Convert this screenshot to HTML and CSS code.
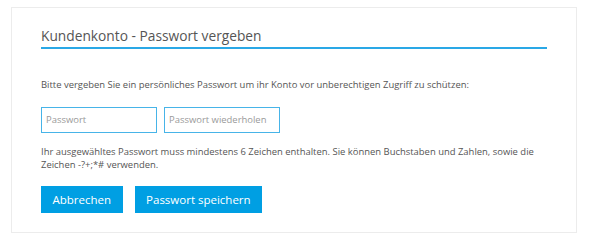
FILE: index.html
```html
<!DOCTYPE html>
<html lang="de">
<head>
<meta charset="utf-8">
<title>Kundenkonto - Passwort vergeben</title>
<link rel="stylesheet" href="styles.css">
</head>
<body>
<div class="card">
  <h1 class="title">Kundenkonto - Passwort vergeben</h1>
  <p class="intro">Bitte vergeben Sie ein persönliches Passwort um ihr Konto vor unberechtigen Zugriff zu schützen:</p>
  <div class="fields">
    <input class="field" type="password" placeholder="Passwort">
    <input class="field" type="password" placeholder="Passwort wiederholen">
  </div>
  <p class="hint">Ihr ausgewähltes Passwort muss mindestens 6 Zeichen enthalten. Sie können Buchstaben und Zahlen, sowie die Zeichen -?+;*# verwenden.</p>
  <div class="actions">
    <button class="btn" type="button">Abbrechen</button>
    <button class="btn" type="button">Passwort speichern</button>
  </div>
</div>
</body>
</html>
```
FILE: styles.css
```css
html, body {
  margin: 0;
  padding: 0;
  background: #ffffff;
}
body {
  font-family: "Open Sans", "DejaVu Sans", sans-serif;
  color: #555555;
}
.card {
  box-sizing: border-box;
  width: 566px;
  margin: 7px 0 0 11px;
  border: 1px solid #ececec;
  padding: 17.5px 29px 19px 29px;
}
.title {
  margin: 0;
  font-size: 13.75px;
  line-height: 20px;
  font-weight: 400;
  color: #555555;
  padding-bottom: 1.5px;
  border-bottom: 2px solid #2aa8e6;
}
.intro {
  margin: 29px 0 0 0;
  font-size: 9.45px;
  line-height: 13px;
  color: #555555;
}
.fields {
  display: flex;
  gap: 7px;
  margin-top: 15.5px;
}
.field {
  box-sizing: border-box;
  width: 116px;
  height: 26px;
  margin: 0;
  border: 1px solid #47b4e8;
  border-radius: 0;
  padding: 0 4px;
  font-family: "Open Sans", "DejaVu Sans", sans-serif;
  font-size: 9.45px;
  color: #555555;
  outline: none;
}
.field::placeholder {
  color: #9a9a9a;
}
.hint {
  margin: 13.5px 0 0 0;
  font-size: 9.45px;
  line-height: 12.5px;
  color: #555555;
}
.actions {
  display: flex;
  gap: 12px;
  margin-top: 14.5px;
}
.btn {
  box-sizing: border-box;
  height: 27px;
  margin: 0;
  border: 0;
  border-radius: 0;
  padding: 0 11.5px;
  background: #009fe3;
  color: #ffffff;
  font-family: "Open Sans", "DejaVu Sans", sans-serif;
  font-size: 11.5px;
  cursor: pointer;
}
```
